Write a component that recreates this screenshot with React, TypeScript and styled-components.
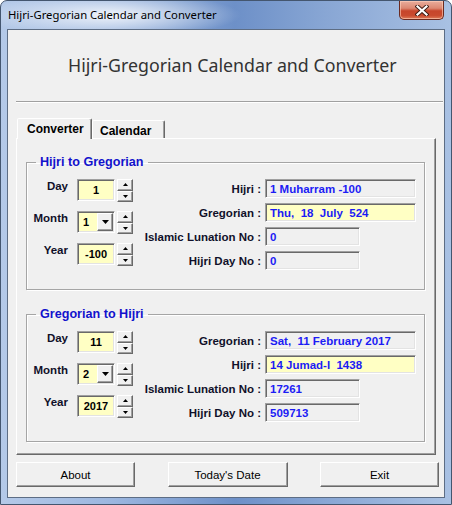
import React from 'react';
import styled, { createGlobalStyle } from 'styled-components';

const GlobalStyle = createGlobalStyle`
  html, body {
    margin: 0;
    padding: 0;
    background: #ffffff;
  }
  body {
    font-family: "Liberation Sans", Arial, sans-serif;
  }
  * {
    box-sizing: border-box;
  }
`;

const Window = styled.div`
  width: 452px;
  height: 505px;
  display: flex;
  flex-direction: column;
  padding: 0 6px 6px;
  border: 1px solid #44566f;
  border-radius: 7px 7px 0 0;
  background:
    radial-gradient(ellipse 130px 22px at 110px 14px, rgba(255,255,255,0.85), rgba(255,255,255,0) 100%),
    linear-gradient(90deg, #b4c9e8 0%, #9bb6df 25%, #6d90c8 52%, #88a6d4 72%, #a9c1e3 100%);
`;

const TitleBar = styled.div`
  height: 28px;
  display: flex;
  align-items: center;
  padding-left: 1px;
`;

const TitleText = styled.span`
  flex: 1;
  font-family: "Noto Sans", "Liberation Sans", sans-serif;
  font-size: 11.3px;
  color: #000;
  padding-bottom: 1px;
`;

const CloseButton = styled.div`
  align-self: flex-start;
  width: 45px;
  height: 19px;
  margin-right: 1px;
  border: 1px solid #6b2a20;
  border-top: none;
  border-radius: 0 0 5px 5px;
  background: linear-gradient(180deg, #e9ad9c 0%, #dc8872 40%, #c7452b 55%, #c94a2e 80%, #dd7a58 100%);
  box-shadow: inset 0 0 0 1px rgba(255, 210, 190, 0.6);
  display: flex;
  align-items: center;
  justify-content: center;
`;

const Client = styled.div`
  flex: 1;
  display: flex;
  flex-direction: column;
  border: 1px solid #5d6d84;
  background: #f0f0f0;
`;

const Header = styled.div`
  height: 71px;
  display: flex;
  align-items: center;
  padding: 0 0 1px 60px;
  font-family: "Noto Sans", "Liberation Sans", sans-serif;
  font-size: 17.8px;
  color: #333333;
`;

const Separator = styled.div`
  height: 2px;
  margin: 0 1px 0 8px;
  border-top: 1px solid #a0a0a0;
  border-bottom: 1px solid #ffffff;
`;

const TabStrip = styled.div`
  display: flex;
  align-items: flex-end;
  height: 20px;
  margin: 15px 0 0 9px;
  position: relative;
  z-index: 1;
`;

const Tab = styled.div<{ $active?: boolean; $w: number }>`
  width: ${p => p.$w}px;
  height: ${p => (p.$active ? 21 : 18)}px;
  margin-bottom: ${p => (p.$active ? -1 : 0)}px;
  padding: ${p => (p.$active ? '3px 0 0 9px' : '3px 0 0 7px')};
  background: #f0f0f0;
  border: 1px solid;
  border-bottom: none;
  border-color: #ffffff #696969 transparent #ffffff;
  border-radius: 2px 2px 0 0;
  box-shadow: inset -1px 0 0 #a0a0a0;
  font-size: 12px;
  font-weight: bold;
  color: #000;
  line-height: 14px;
`;

const Panel = styled.div`
  width: 420px;
  height: 317px;
  margin-left: 8px;
  display: flex;
  flex-direction: column;
  border: 1px solid;
  border-color: #ffffff #696969 #696969 #ffffff;
  box-shadow: inset -1px -1px 0 #a0a0a0;
`;

const Group = styled.fieldset<{ $top: number }>`
  margin: ${p => p.$top}px 10px 0 9px;
  padding: 9px 0 19px 0;
  border: 1px solid #a5a5a5;
  box-shadow: 1px 1px 0 #ffffff, inset 1px 1px 0 #ffffff;
  min-inline-size: 0;
`;

const GroupTitle = styled.legend`
  margin-left: 9px;
  padding: 0 4px;
  font-size: 12.6px;
  font-weight: bold;
  line-height: 16px;
  color: #1212cc;
`;

const GroupBody = styled.div`
  display: flex;
  align-items: flex-start;
  gap: 8px;
`;

const Inputs = styled.div`
  display: grid;
  grid-template-columns: 41px auto;
  column-gap: 9px;
  row-gap: 9px;
  align-items: start;
`;

const InputLabel = styled.div`
  justify-self: end;
  font-size: 11.5px;
  font-weight: bold;
  line-height: 14px;
  color: #10102a;
`;

const Control = styled.div`
  display: flex;
  gap: 2px;
`;

const Sunken = styled.div`
  border: 1px solid;
  border-color: #a0a0a0 #ffffff #ffffff #a0a0a0;
  box-shadow: inset 1px 1px 0 #696969, inset -1px -1px 0 #e3e3e3;
`;

const Field = styled(Sunken)`
  width: 38px;
  height: 22px;
  background: #ffffc4;
  display: flex;
  align-items: center;
  justify-content: center;
  font-size: 11px;
  font-weight: bold;
  color: #000;
`;

const Combo = styled(Sunken)`
  width: 38px;
  height: 22px;
  padding: 2px 1px 2px 2px;
  background: #ffffc4;
  display: flex;
  align-items: center;
  justify-content: space-between;
  font-size: 11px;
  font-weight: bold;
  color: #000;
  span {
    padding-left: 3px;
  }
`;

const Raised = styled.div`
  background: #f0f0f0;
  border: 1px solid;
  border-color: #ffffff #696969 #696969 #ffffff;
  box-shadow: inset -1px -1px 0 #a0a0a0;
  display: flex;
  align-items: center;
  justify-content: center;
`;

const DropButton = styled(Raised)`
  width: 16px;
  height: 18px;
`;

const Spin = styled.div`
  display: flex;
  flex-direction: column;
  width: 16px;
  height: 23px;
`;

const SpinButton = styled(Raised)`
  flex: 1;
`;

const Results = styled.div`
  display: grid;
  grid-template-columns: 120px auto;
  column-gap: 4px;
  row-gap: 5px;
  align-items: center;
  justify-items: start;
`;

const ResultLabel = styled.div`
  justify-self: end;
  font-size: 11.5px;
  font-weight: bold;
  color: #10102a;
`;

const Output = styled(Sunken)<{ $wide?: boolean; $yellow?: boolean }>`
  width: ${p => (p.$wide ? 151 : 95)}px;
  height: 19px;
  padding: 0 0 0 4px;
  background: ${p => (p.$yellow ? '#ffffc4' : '#f0f0f0')};
  display: flex;
  align-items: center;
  font-size: 11.5px;
  font-weight: bold;
  color: #1c1cf5;
  white-space: pre;
`;

const ButtonRow = styled.div`
  display: flex;
  justify-content: space-between;
  width: 423px;
  margin: 7px 0 0 8px;
`;

const PushButton = styled(Raised)<{ $w: number }>`
  width: ${p => p.$w}px;
  height: 25px;
  font-size: 11.5px;
  color: #000;
`;

const Arrow = ({ up, big }: { up?: boolean; big?: boolean }) => {
  const w = big ? 7 : 5;
  const h = big ? 4 : 3;
  return (
    <svg width={w} height={h} viewBox={`0 0 ${w} ${h}`}>
      <path d={up ? `M0 ${h} L${w / 2} 0 L${w} ${h}Z` : `M0 0 L${w / 2} ${h} L${w} 0Z`} fill="#000" />
    </svg>
  );
};

const SpinBox = () => (
  <Spin>
    <SpinButton><Arrow up /></SpinButton>
    <SpinButton><Arrow /></SpinButton>
  </Spin>
);

type Row = { label: string; value: string; wide?: boolean; yellow?: boolean };

type Props = {
  title: string;
  top: number;
  day: string;
  month: string;
  year: string;
  rows: Row[];
};

const Converter = ({ title, top, day, month, year, rows }: Props) => (
  <Group $top={top}>
    <GroupTitle>{title}</GroupTitle>
    <GroupBody>
      <Inputs>
        <InputLabel>Day</InputLabel>
        <Control>
          <Field>{day}</Field>
          <SpinBox />
        </Control>
        <InputLabel>Month</InputLabel>
        <Control>
          <Combo>
            <span>{month}</span>
            <DropButton><Arrow big /></DropButton>
          </Combo>
          <SpinBox />
        </Control>
        <InputLabel>Year</InputLabel>
        <Control>
          <Field>{year}</Field>
          <SpinBox />
        </Control>
      </Inputs>
      <Results>
        {rows.map(r => (
          <React.Fragment key={r.label}>
            <ResultLabel>{r.label}</ResultLabel>
            <Output $wide={r.wide} $yellow={r.yellow}>{r.value}</Output>
          </React.Fragment>
        ))}
      </Results>
    </GroupBody>
  </Group>
);

const hijriRows: Row[] = [
  { label: 'Hijri :', value: '1 Muharram -100', wide: true },
  { label: 'Gregorian :', value: 'Thu,  18  July  524', wide: true, yellow: true },
  { label: 'Islamic Lunation No :', value: '0' },
  { label: 'Hijri Day No :', value: '0' },
];

const gregRows: Row[] = [
  { label: 'Gregorian :', value: 'Sat,  11 February 2017', wide: true },
  { label: 'Hijri :', value: '14 Jumad-I  1438', wide: true, yellow: true },
  { label: 'Islamic Lunation No :', value: '17261' },
  { label: 'Hijri Day No :', value: '509713' },
];

export default function App() {
  return (
    <>
      <GlobalStyle />
      <Window>
        <TitleBar>
          <TitleText>Hijri-Gregorian Calendar and Converter</TitleText>
          <CloseButton>
            <svg width="14" height="11" viewBox="0 0 14 11">
              <path d="M2.5 1.5 L11.5 9.5 M11.5 1.5 L2.5 9.5" stroke="#3b1a12" strokeWidth="4" strokeLinecap="square" />
              <path d="M2.5 1.5 L11.5 9.5 M11.5 1.5 L2.5 9.5" stroke="#ffffff" strokeWidth="2.2" strokeLinecap="square" />
            </svg>
          </CloseButton>
        </TitleBar>
        <Client>
          <Header>Hijri-Gregorian Calendar and Converter</Header>
          <Separator />
          <TabStrip>
            <Tab $active $w={75}>Converter</Tab>
            <Tab $w={73}>Calendar</Tab>
          </TabStrip>
          <Panel>
            <Converter title="Hijri to Gregorian" top={15} day="1" month="1" year="-100" rows={hijriRows} />
            <Converter title="Gregorian to Hijri" top={16} day="11" month="2" year="2017" rows={gregRows} />
          </Panel>
          <ButtonRow>
            <PushButton $w={119}>About</PushButton>
            <PushButton $w={120}>Today's Date</PushButton>
            <PushButton $w={119}>Exit</PushButton>
          </ButtonRow>
        </Client>
      </Window>
    </>
  );
}
